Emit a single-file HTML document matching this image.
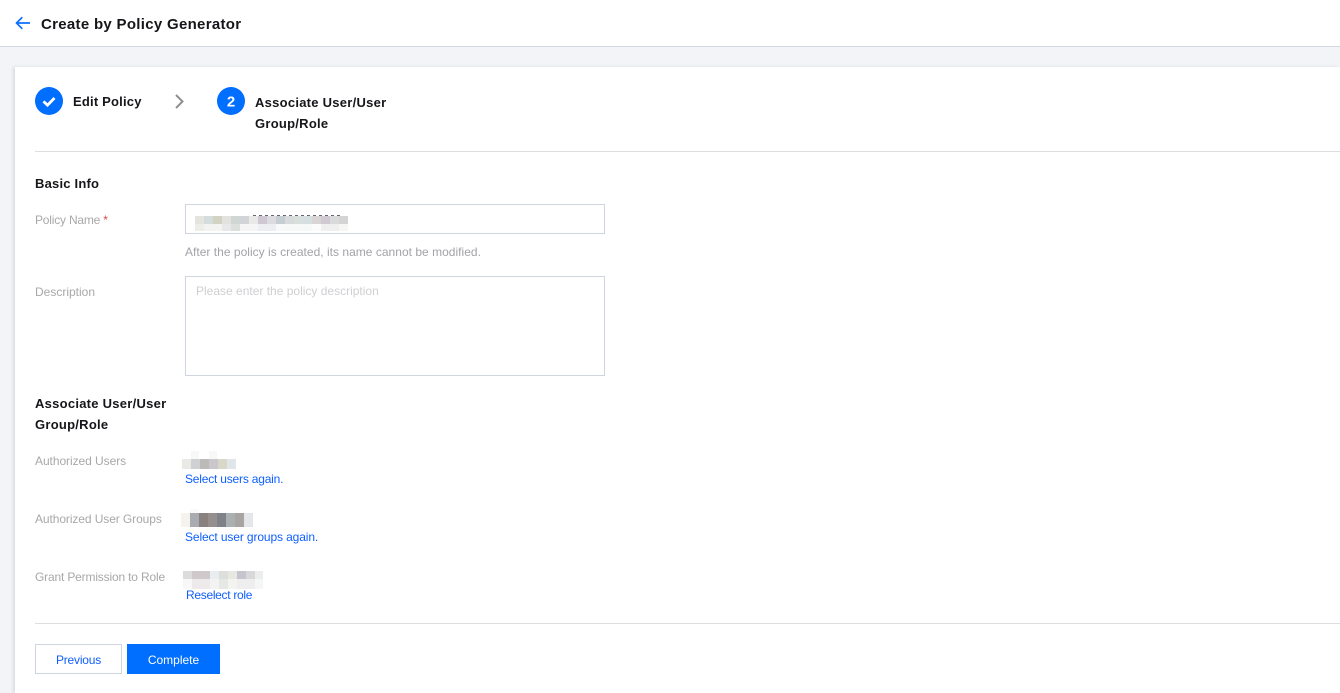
<!DOCTYPE html>
<html><head><meta charset="utf-8"><style>
html,body{margin:0;padding:0;width:1340px;height:693px;overflow:hidden;background:#f2f4f8;font-family:"Liberation Sans","Noto Sans CJK SC",sans-serif}
.t{position:absolute;white-space:nowrap;font-size:12px;line-height:18px}
.b{font-weight:bold;color:#16161a;font-size:13px;line-height:21px}
.l{color:#a8a8a8}
.a{color:#0e5fff}
.box{position:absolute;box-sizing:border-box;border:1px solid #cfd5de;background:#fff}
.m{position:absolute}
</style></head><body>
<div style="position:absolute;left:0;top:0;width:1340px;height:46px;background:#fff;border-bottom:1px solid #d3d8e3"></div>
<svg style="position:absolute;left:14px;top:14px" width="20" height="20" viewBox="0 0 20 20" fill="none" stroke="#0d6eff" stroke-width="1.7"><path d="M2.5 9H16M8.3 3.2L2.5 9L8.3 14.8"/></svg>
<div class="t" style="left:41px;top:14px;font-size:15px;line-height:21px;font-weight:bold;color:#16161a;letter-spacing:.3px">Create by Policy Generator</div>
<div style="position:absolute;left:15px;top:67px;width:1325px;height:626px;background:#fff;box-shadow:-2px 0 3px rgba(54,58,80,.12)"></div>
<svg style="position:absolute;left:35px;top:87px" width="28" height="28" viewBox="0 0 28 28"><circle cx="14" cy="14" r="14" fill="#006eff"/><path d="M8.5 14.4L12.5 18.2L19.5 11" fill="none" stroke="#fff" stroke-width="2.8"/></svg>
<div class="t b" style="left:73px;top:91px;letter-spacing:.2px">Edit Policy</div>
<svg style="position:absolute;left:172px;top:92px" width="16" height="18" viewBox="0 0 16 18" fill="none" stroke="#8f8f8f" stroke-width="2"><path d="M4 3L10.5 9.5L4 16"/></svg>
<svg style="position:absolute;left:217px;top:87px" width="28" height="28" viewBox="0 0 28 28"><circle cx="14" cy="14" r="14" fill="#006eff"/><text x="14" y="19.3" text-anchor="middle" fill="#fff" font-family="Liberation Sans" font-weight="bold" font-size="15">2</text></svg>
<div class="t b" style="left:255px;top:92px;letter-spacing:.26px">Associate User/User<br>Group/Role</div>
<div style="position:absolute;left:35px;top:151px;width:1305px;height:1px;background:#dcdee2"></div>
<div class="t b" style="left:35px;top:173px;letter-spacing:.2px">Basic Info</div>
<div class="t l" style="left:35px;top:211px;letter-spacing:-.2px">Policy Name <span style="color:#e54545">*</span></div>
<div class="box" style="left:185px;top:204px;width:420px;height:30px"></div>
<svg class="m" style="left:195px;top:213px" width="155" height="20" shape-rendering="crispEdges">
<path d="M58 2.5H148" stroke="#666672" stroke-width="1" stroke-dasharray="3 3"/>
<g transform="translate(0 1) scale(1.125 1)">
<rect x="0" y="2" width="8" height="8" fill="#e6e4df"/><rect x="8" y="2" width="8" height="8" fill="#d4dcdc"/><rect x="16" y="2" width="8" height="8" fill="#d3d3c4"/><rect x="24" y="2" width="8" height="8" fill="#e4e2df"/><rect x="32" y="2" width="8" height="8" fill="#cfd6d4"/><rect x="40" y="2" width="8" height="8" fill="#d2d4d7"/><rect x="48" y="2" width="8" height="8" fill="#e9e9e7"/><rect x="56" y="2" width="8" height="8" fill="#cdc8d1"/><rect x="64" y="2" width="8" height="8" fill="#dcdce0"/><rect x="72" y="2" width="8" height="8" fill="#c5ced2"/><rect x="80" y="2" width="8" height="8" fill="#d8dbdb"/><rect x="88" y="2" width="8" height="8" fill="#d8dfdd"/><rect x="96" y="2" width="8" height="8" fill="#d5dee0"/><rect x="104" y="2" width="8" height="8" fill="#d9d5d5"/><rect x="112" y="2" width="8" height="8" fill="#d0c9d2"/><rect x="120" y="2" width="8" height="8" fill="#d8dadc"/><rect x="128" y="2" width="8" height="8" fill="#d4d4d4"/>
<rect x="0" y="10" width="8" height="7" fill="#eeeee9"/><rect x="8" y="10" width="16" height="7" fill="#f3f3f1"/><rect x="24" y="10" width="8" height="7" fill="#e8e8ea"/><rect x="32" y="10" width="8" height="7" fill="#dddfdc"/><rect x="40" y="10" width="16" height="7" fill="#f5f5f5"/><rect x="56" y="10" width="16" height="7" fill="#eceef1"/><rect x="72" y="10" width="8" height="7" fill="#f7f9fa"/><rect x="80" y="10" width="24" height="7" fill="#f7f8f8"/><rect x="104" y="10" width="8" height="7" fill="#fbfbfb"/><rect x="112" y="10" width="16" height="7" fill="#f0eff0"/><rect x="128" y="10" width="8" height="7" fill="#f6f6f4"/>
</g></svg>
<div class="t" style="left:185px;top:243px;color:#a3a3a8;letter-spacing:.02px">After the policy is created, its name cannot be modified.</div>
<div class="t l" style="left:35px;top:283px">Description</div>
<div class="box" style="left:185px;top:276px;width:420px;height:100px"></div>
<div class="t" style="left:196px;top:282px;color:#cfcfd2">Please enter the policy description</div>
<div class="t b" style="left:35px;top:393px;letter-spacing:.26px">Associate User/User<br>Group/Role</div>
<div class="t l" style="left:35px;top:452px;letter-spacing:-.06px">Authorized Users</div>
<svg class="m" style="left:182px;top:451px" width="56" height="20" shape-rendering="crispEdges"><rect x="9" y="0" width="8" height="8" fill="#f8f8f8"/><rect x="27" y="0" width="8" height="8" fill="#f8f8f8"/><rect x="0" y="8" width="9" height="10" fill="#ebe9e6"/><rect x="9" y="8" width="9" height="10" fill="#cfd0d4"/><rect x="18" y="8" width="9" height="10" fill="#bdbbb9"/><rect x="27" y="8" width="9" height="10" fill="#c9c7c9"/><rect x="36" y="8" width="9" height="10" fill="#d8d7c8"/><rect x="45" y="8" width="9" height="10" fill="#dfe5e8"/></svg>
<div class="t a" style="left:185px;top:470px;letter-spacing:-.2px">Select users again.</div>
<div class="t l" style="left:35px;top:510px;letter-spacing:-.09px">Authorized User Groups</div>
<svg class="m" style="left:181px;top:509px" width="75" height="20" shape-rendering="crispEdges"><rect x="9" y="0" width="9" height="4" fill="#fafafa"/><rect x="0" y="4" width="9" height="14" fill="#f6f2ee"/><rect x="9" y="4" width="9" height="14" fill="#a8abb0"/><rect x="18" y="4" width="9" height="14" fill="#89817e"/><rect x="27" y="4" width="9" height="14" fill="#95908f"/><rect x="36" y="4" width="9" height="14" fill="#7f8288"/><rect x="45" y="4" width="9" height="14" fill="#abb0b2"/><rect x="54" y="4" width="9" height="14" fill="#a6a5a2"/><rect x="63" y="4" width="9" height="14" fill="#e5e6ea"/></svg>
<div class="t a" style="left:185px;top:528px;letter-spacing:-.12px">Select user groups again.</div>
<div class="t l" style="left:35px;top:568px;letter-spacing:-.17px">Grant Permission to Role</div>
<svg class="m" style="left:183px;top:571px" width="82" height="20" shape-rendering="crispEdges"><rect x="0" y="0" width="9" height="8" fill="#dcdcdc"/><rect x="9" y="0" width="18" height="8" fill="#cfc9cc"/><rect x="27" y="0" width="9" height="8" fill="#e9edf0"/><rect x="36" y="0" width="9" height="8" fill="#dcdfdc"/><rect x="45" y="0" width="9" height="8" fill="#e8e8e2"/><rect x="54" y="0" width="9" height="8" fill="#c8c4cf"/><rect x="63" y="0" width="9" height="8" fill="#d8d8da"/><rect x="72" y="0" width="8" height="8" fill="#eceeee"/><rect x="0" y="8" width="9" height="10" fill="#f8f8f8"/><rect x="9" y="8" width="18" height="10" fill="#eeeaec"/><rect x="27" y="8" width="9" height="10" fill="#f3f3f3"/><rect x="36" y="8" width="9" height="10" fill="#e6e8e6"/><rect x="45" y="8" width="9" height="10" fill="#f3f3f0"/><rect x="54" y="8" width="18" height="10" fill="#eeeeef"/><rect x="72" y="8" width="8" height="10" fill="#f5f6f6"/></svg>
<div class="t a" style="left:186px;top:586px;letter-spacing:-.3px">Reselect role</div>
<div style="position:absolute;left:35px;top:623px;width:1305px;height:1px;background:#dcdee2"></div>
<div class="box" style="left:35px;top:644px;width:87px;height:30px"></div>
<div class="t a" style="left:35px;top:651px;width:87px;text-align:center;letter-spacing:-.2px">Previous</div>
<div style="position:absolute;left:127px;top:644px;width:93px;height:30px;background:#006eff"></div>
<div class="t" style="left:127px;top:651px;width:93px;text-align:center;color:#fff">Complete</div>
</body></html>
